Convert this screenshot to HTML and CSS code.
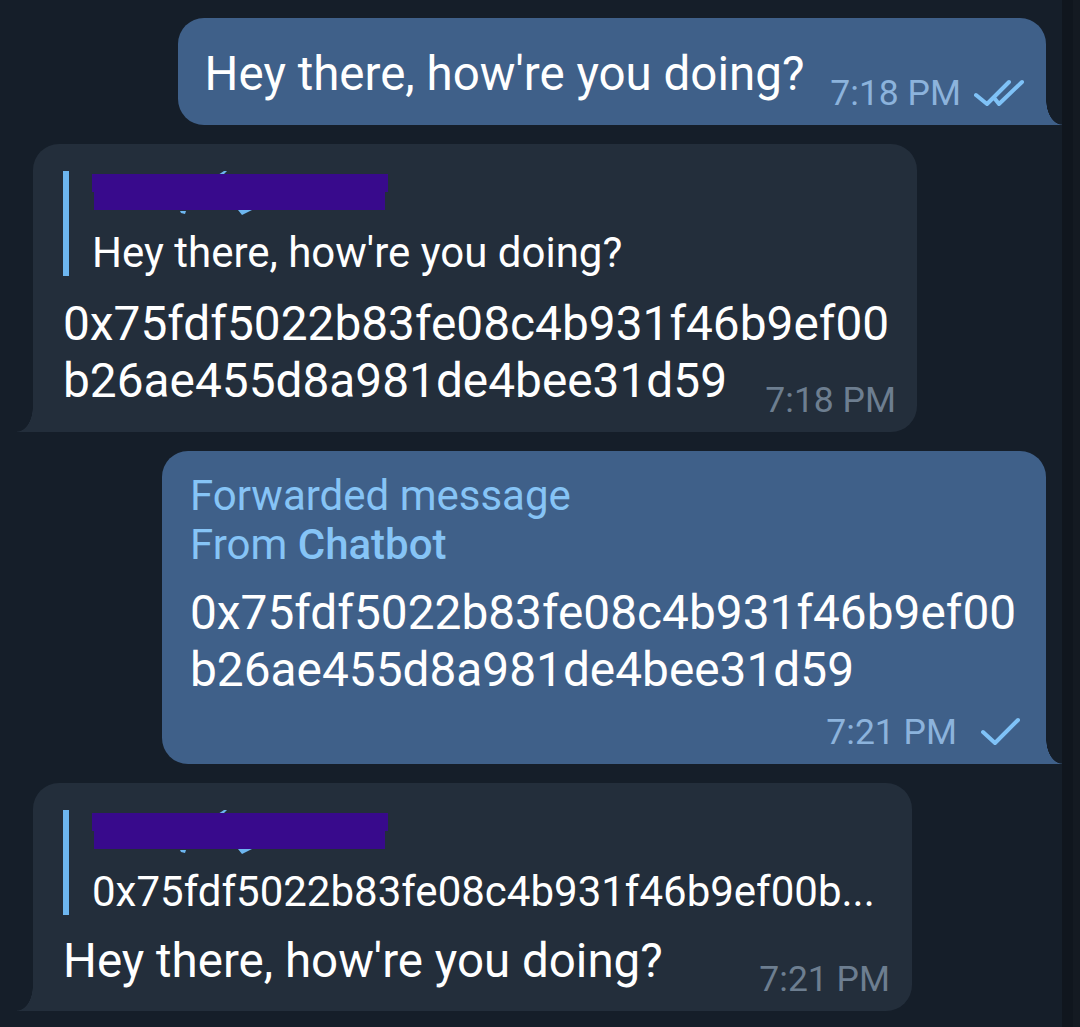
FILE: index.html
```html
<!DOCTYPE html>
<html>
<head>
<meta charset="utf-8">
<link rel="stylesheet" href="styles.css">
</head>
<body>
<div class="chat">
  <div class="bubble out b1">
    <div class="line">
      <div class="text">Hey there, how're you doing?</div>
      <div class="meta">
        <span class="time">7:18 PM</span>
        <svg class="ticks" width="50" height="30" viewBox="0 0 50 30"><path d="M2 17 L13 26 L35 4 M21 21 L25 26 L48 4" fill="none" stroke="#7fc2f7" stroke-width="4" stroke-linecap="round" stroke-linejoin="round"/></svg>
      </div>
    </div>
  </div>

  <div class="bubble in b2">
    <div class="reply">
      <div class="reply-name">
        <svg width="300" height="46" viewBox="0 0 300 46"><path d="M126 4 L132 0 L135 0 L131 4 Z M88 40 L94 40 L93 43 L89 42 Z M146 39 L162 38 L150 44 Z" fill="#6db6f0"/><path d="M0 3 H296 V21 H293 V39 H2 V21 H0 Z" fill="#380a8c"/></svg>
      </div>
      <div class="reply-text">Hey there, how're you doing?</div>
    </div>
    <div class="stack">
      <div class="hash">0x75fdf5022b83fe08c4b931f46b9ef00<br>b26ae455d8a981de4bee31d59</div>
      <div class="meta"><span class="time">7:18 PM</span></div>
    </div>
  </div>

  <div class="bubble out b3">
    <div class="fwd">
      <div>Forwarded message</div>
      <div>From <span class="fwd-name">Chatbot</span></div>
    </div>
    <div class="hash hash-fwd">0x75fdf5022b83fe08c4b931f46b9ef00<br>b26ae455d8a981de4bee31d59</div>
    <div class="meta meta-row">
      <span class="time">7:21 PM</span>
      <svg class="tick" width="42" height="30" viewBox="0 0 42 30"><path d="M3 16 L15 27 L38 4" fill="none" stroke="#7fc2f7" stroke-width="4" stroke-linecap="round" stroke-linejoin="round"/></svg>
    </div>
  </div>

  <div class="bubble in b4">
    <div class="reply">
      <div class="reply-name">
        <svg width="300" height="46" viewBox="0 0 300 46"><path d="M126 4 L132 0 L135 0 L131 4 Z M88 40 L94 40 L93 43 L89 42 Z M146 39 L162 38 L150 44 Z" fill="#6db6f0"/><path d="M0 3 H296 V21 H293 V39 H2 V21 H0 Z" fill="#380a8c"/></svg>
      </div>
      <div class="reply-text">0x75fdf5022b83fe08c4b931f46b9ef00b...</div>
    </div>
    <div class="line">
      <div class="text">Hey there, how're you doing?</div>
      <div class="meta"><span class="time">7:21 PM</span></div>
    </div>
  </div>
</div>
</body>
</html>
```

FILE: styles.css
```css
* {
  box-sizing: border-box;
  margin: 0;
  padding: 0;
}

html,
body {
  height: 100%;
}

body {
  background: linear-gradient(to right, #151e29 0, #151e29 1062px, #10161e 1062px, #10161e 1073px, #141a22 1073px);
  font-family: Roboto, "Noto Sans", sans-serif;
  color: #ffffff;
  overflow: hidden;
}

.chat {
  display: flex;
  flex-direction: column;
  gap: 19px;
  padding: 18px 34px 0 33px;
}

.bubble {
  position: relative;
  border-radius: 26px;
  max-width: 884px;
}

.bubble.out {
  align-self: flex-end;
  background: #3f6089;
  border-bottom-right-radius: 0;
}

.bubble.in {
  align-self: flex-start;
  background: #232e3b;
  border-bottom-left-radius: 0;
}

.bubble.out::after {
  content: "";
  position: absolute;
  right: -16px;
  bottom: 0;
  width: 16px;
  height: 25px;
  background: radial-gradient(ellipse 16px 25px at 100% 0, rgba(63, 96, 137, 0) 97%, #3f6089 100%);
}

.bubble.in::after {
  content: "";
  position: absolute;
  left: -16px;
  bottom: 0;
  width: 16px;
  height: 25px;
  background: radial-gradient(ellipse 16px 25px at 0 0, rgba(35, 46, 59, 0) 97%, #232e3b 100%);
}

.b1 {
  padding: 28px 22px 12px 27px;
}

.b2 {
  width: 884px;
  padding: 27px 21px 12px 30px;
}

.b3 {
  width: 884px;
  padding: 20px 24px 12px 28px;
}

.b4 {
  width: 879px;
  padding: 27px 22px 12px 30px;
}

.line {
  display: flex;
  align-items: flex-end;
}

.stack {
  display: grid;
  margin-top: 20px;
}

.stack > * {
  grid-area: 1 / 1;
}

.stack .meta {
  justify-self: end;
  align-self: end;
}

.stack .hash {
  margin-bottom: 10px;
}

.text {
  font-size: 47.5px;
  line-height: 57px;
  margin-bottom: 9px;
  white-space: nowrap;
}

.b1 .text {
  margin-bottom: 10px;
}

.b4 .line {
  margin-top: 18px;
}

.hash {
  font-size: 47.8px;
  line-height: 57px;
  white-space: nowrap;
}

.hash-fwd {
  margin-top: 16px;
}

.meta {
  display: flex;
  align-items: flex-end;
  margin-left: auto;
  padding-left: 26px;
  font-size: 35.5px;
  line-height: 40px;
  white-space: nowrap;
}

.meta-row {
  justify-content: flex-end;
  margin-top: 13px;
}

.out .time {
  color: #8cb3dc;
}

.in .time {
  color: #6d7e90;
}

.ticks {
  margin-left: 13px;
  margin-bottom: 5px;
}

.tick {
  margin-left: 23px;
  margin-bottom: 6px;
}

.reply {
  border-left: 6px solid #6db6f0;
  padding-left: 23px;
}

.reply-name {
  height: 59px;
}

.reply-name svg {
  display: block;
}

.reply-text {
  font-size: 42px;
  line-height: 46px;
  white-space: nowrap;
}

.fwd {
  font-size: 42px;
  line-height: 49px;
  color: #86c4f6;
}

.fwd-name {
  font-weight: 500;
}
```
